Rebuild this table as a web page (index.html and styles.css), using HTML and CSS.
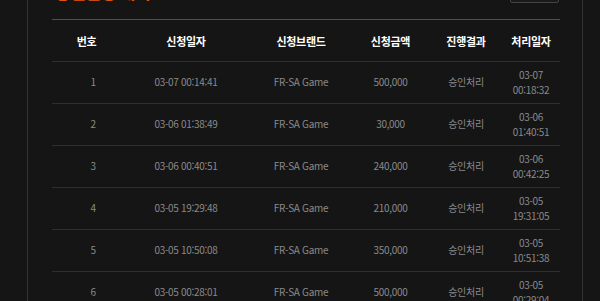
FILE: index.html
```html
<!DOCTYPE html>
<html lang="ko">
<head>
<meta charset="utf-8">
<link rel="stylesheet" href="styles.css">
</head>
<body>
<div class="panel">
  <div class="title-row">
    <h2 class="title">충전신청 내역</h2>
    <button class="more">전체</button>
  </div>
  <table class="list">
    <colgroup>
      <col class="c1"><col class="c2"><col class="c3"><col class="c4"><col class="c5"><col class="c6">
    </colgroup>
    <thead>
      <tr><th>번호</th><th>신청일자</th><th>신청브랜드</th><th>신청금액</th><th>진행결과</th><th>처리일자</th></tr>
    </thead>
    <tbody>
      <tr><td class="num">1</td><td>03-07 00:14:41</td><td>FR-SA Game</td><td>500,000</td><td>승인처리</td><td>03-07<br>00:18:32</td></tr>
      <tr><td class="num">2</td><td>03-06 01:38:49</td><td>FR-SA Game</td><td>30,000</td><td>승인처리</td><td>03-06<br>01:40:51</td></tr>
      <tr><td class="num">3</td><td>03-06 00:40:51</td><td>FR-SA Game</td><td>240,000</td><td>승인처리</td><td>03-06<br>00:42:25</td></tr>
      <tr><td class="num">4</td><td>03-05 19:29:48</td><td>FR-SA Game</td><td>210,000</td><td>승인처리</td><td>03-05<br>19:31:05</td></tr>
      <tr><td class="num">5</td><td>03-05 10:50:08</td><td>FR-SA Game</td><td>350,000</td><td>승인처리</td><td>03-05<br>10:51:38</td></tr>
      <tr><td class="num">6</td><td>03-05 00:28:01</td><td>FR-SA Game</td><td>500,000</td><td>승인처리</td><td>03-05<br>00:29:04</td></tr>
    </tbody>
  </table>
</div>
</body>
</html>
```
FILE: styles.css
```css
html, body {
  margin: 0;
  padding: 0;
  background: #151515;
  overflow: hidden;
}
body {
  font-family: "Noto Sans CJK KR", "Noto Sans", sans-serif;
  color: #8c8c8c;
}
.panel {
  margin: -30px 0 0 27px;
  width: 556px;
  border-left: 1px solid #333333;
  border-right: 1px solid #333333;
  padding: 0 23px 0 24px;
  box-sizing: border-box;
}
.title-row {
  height: 32px;
  display: flex;
  justify-content: space-between;
  align-items: flex-end;
  margin-bottom: 17px;
}
.title {
  margin: 0 0 0 3px;
  font-size: 17px;
  line-height: 20px;
  font-weight: 700;
  color: #e2570f;
  letter-spacing: -0.5px;
  position: relative;
  top: 0;
}
.more {
  width: 49px;
  height: 30px;
  margin-bottom: -1px;
  background: #1a1a1a;
  border: 1px solid #444444;
  border-radius: 2px;
  color: #999;
  font-family: inherit;
  font-size: 10px;
}
.list {
  width: 508px;
  border-collapse: collapse;
  table-layout: fixed;
  border-top: 1px solid #8a3c14;
}
.c1 { width: 69px; }
.c2 { width: 130px; }
.c3 { width: 100px; }
.c4 { width: 79px; }
.c5 { width: 72px; }
.c6 { width: 58px; }
.list th, .list td {
  height: 41px;
  padding: 0;
  text-align: center;
  vertical-align: middle;
  border-bottom: 1px solid #2e2e2e;
  letter-spacing: -0.3px;
}
.list th {
  font-size: 11px;
  font-weight: 700;
  color: #ffffff;
}
.list td {
  font-size: 10px;
  line-height: 14.5px;
  color: #8a8a8a;
}
.list td.num {
  padding-left: 13px;
}
```
